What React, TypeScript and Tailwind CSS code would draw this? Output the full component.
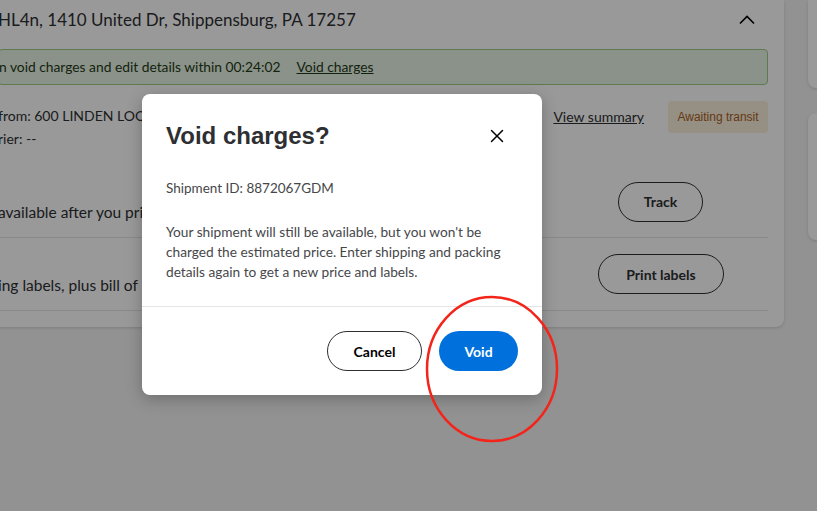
import { X } from 'lucide-react';

const body = "font-['Lato','Noto_Sans',sans-serif]";

export default function App() {
  return (
    <div className={`relative h-[511px] w-[817px] overflow-hidden bg-[#f3f3f3] text-[#2e2f32] ${body}`}>
      {/* page behind the dialog */}
      <div className="flex gap-6">
        <div className="-ml-4 w-[800px] shrink-0 rounded-b-lg bg-white pb-4 pl-[14px] pr-4 shadow-[0_1px_3px_rgba(0,0,0,0.15)]">
          <div className="flex h-10 items-center justify-between">
            <h2 className="whitespace-nowrap text-[17px]">HL4n, 1410 United Dr, Shippensburg, PA 17257</h2>
            <svg width="18" height="12" viewBox="0 0 18 12" className="mr-[12px]">
              <polyline points="2,9.5 9,2.5 16,9.5" fill="none" stroke="#000" strokeWidth="1.6" />
            </svg>
          </div>

          <div className="mt-[9px] flex h-9 items-center gap-4 rounded border border-[#9ccc88] bg-[#e8f3e4] text-[13.8px] text-[#1e3b17]">
            <span className="whitespace-nowrap">n void charges and edit details within 00:24:02</span>
            <a href="#" className="underline">Void charges</a>
          </div>

          <div className="mt-4 flex items-start">
            <div className="flex-1 pt-[3px] text-[14px] leading-[23px]">
              <p className="whitespace-nowrap">from: 600 LINDEN LOOP, SHIPPENSBURG</p>
              <p>rier: --</p>
            </div>
            <a href="#" className="mr-6 mt-[5px] text-[14px] underline">View summary</a>
            <span className="flex h-8 w-[100px] items-center justify-center rounded-sm bg-[#fbeedc] font-['Liberation_Sans',sans-serif] text-[12px] text-[#a8621d]">
              Awaiting transit
            </span>
          </div>

          <div className="mt-[16px] flex h-[72px] items-center border-b border-[#e3e4e5]">
            <p className="flex-1 whitespace-nowrap pt-[23px] text-[15.5px]">available after you print labels</p>
            <button className="mr-[65px] h-10 w-[85px] rounded-full border border-[#2e2f32] text-[14px] font-bold">Track</button>
          </div>

          <div className="flex h-[73px] items-center border-b border-[#e3e4e5]">
            <p className="flex-1 whitespace-nowrap pt-[23px] text-[15.5px]">ing labels, plus bill of lading</p>
            <button className="mr-11 h-10 w-[126px] rounded-full border border-[#2e2f32] text-[14px] font-bold">Print labels</button>
          </div>
        </div>

        <div className="flex w-12 shrink-0 flex-col gap-[25px]">
          <div className="h-[88px] rounded-b-lg bg-white shadow-[0_1px_3px_rgba(0,0,0,0.15)]" />
          <div className="h-[127px] rounded-lg bg-white shadow-[0_1px_3px_rgba(0,0,0,0.15)]" />
        </div>
      </div>

      {/* scrim */}
      <div className="absolute inset-0 bg-black/40" />

      {/* dialog */}
      <div className="absolute left-[142px] top-[94px] w-[400px] rounded-lg bg-white shadow-[0_4px_16px_rgba(0,0,0,0.25)]">
        <div className="px-6 pt-6">
          <div className="flex h-9 items-center justify-between">
            <h1 className="font-['Liberation_Sans',sans-serif] text-[24px] font-bold text-[#2e2f32]">Void charges?</h1>
            <button className="mr-[1px] flex h-10 w-10 items-center justify-center" aria-label="Close">
              <X size={22} strokeWidth={1.6} color="#000" />
            </button>
          </div>
          <p className="mt-6 text-[13.5px] leading-5 text-[#46474a]">Shipment ID: 8872067GDM</p>
          <p className="mt-6 pb-6 text-[13.7px] leading-5 text-[#46474a]">
            Your shipment will still be available, but you won't be
            <br />
            charged the estimated price. Enter shipping and packing
            <br />
            details again to get a new price and labels.
          </p>
        </div>
        <div className="flex justify-end gap-[17px] border-t border-[#e3e4e5] px-6 py-6">
          <button className="h-10 w-[95px] rounded-full border border-[#2e2f32] text-[14px] font-bold text-[#000]">Cancel</button>
          <button className="h-10 w-[79px] rounded-full bg-[#0071dc] text-[14px] font-bold text-white">Void</button>
        </div>
      </div>

      {/* annotation circle */}
      <svg className="absolute left-[424px] top-[294px]" width="136" height="150" viewBox="0 0 136 150">
        <ellipse cx="68" cy="75" rx="65" ry="72" fill="none" stroke="#f3241a" strokeWidth="2.5" />
      </svg>
    </div>
  );
}
